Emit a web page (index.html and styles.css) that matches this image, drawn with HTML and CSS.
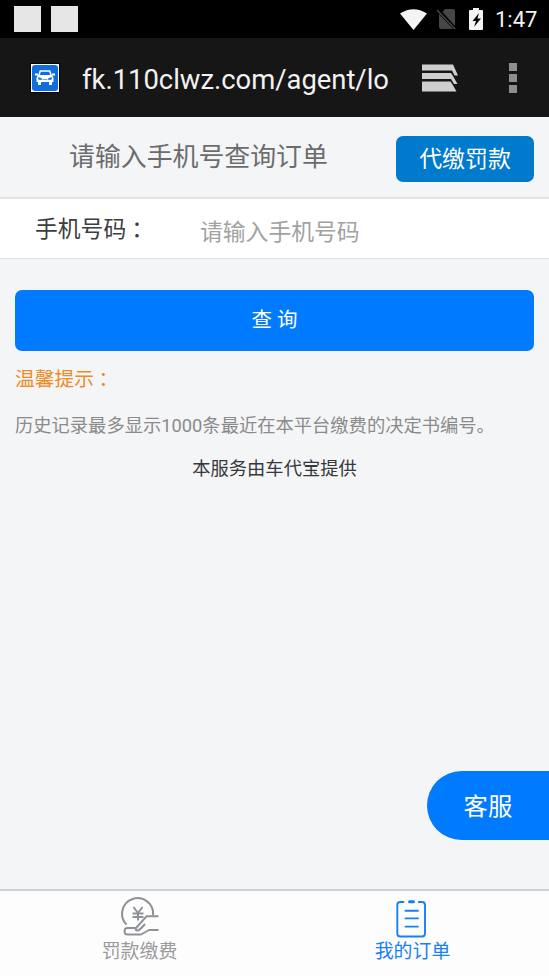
FILE: index.html
```
<!DOCTYPE html>
<html lang="zh-CN">
<head>
<meta charset="utf-8">
<meta name="viewport" content="width=device-width">
<title>查询订单</title>
<link rel="stylesheet" href="styles.css">
</head>
<body>
<div class="status">
  <div class="notices"><i></i><i></i></div>
  <svg class="wifi" width="28" height="24" viewBox="0 0 28 24"><path d="M0 6.500Q13.500-2 27 6.500L13.500 23Z" fill="#f4f4f4"/></svg>
  <svg class="sim" width="22" height="24" viewBox="0 0 22 24"><path d="M9 2h8q2 0 2 2v15L6.500 5ZM3 7l14 15H5q-2 0-2-2Z" fill="#464646"/><path d="M1 3l18 19" stroke="#464646" stroke-width="1.600"/></svg>
  <svg class="battery" width="15" height="24" viewBox="0 0 15 24"><path d="M4 1h6v2h3q1 0 1 1v18q0 1-1 1H1q-1 0-1-1V4q0-1 1-1h3Z" fill="#f4f4f4"/><path d="M10 6L3.500 14h3.500L5 20l7-8.500H8.500Z" fill="#000"/></svg>
  <span class="clock">1:47</span>
</div>
<div class="browser">
  <svg class="favicon" width="30" height="30" viewBox="0 0 30 30"><path d="M0 0h30v30H0Z" fill="#000"/><path d="M1 1h28v28H1Z" fill="#fff"/><rect x="2" y="2" width="26" height="26" rx="3" fill="#106de0"/><path d="M9 12l1.300-4h9.400l1.300 4" fill="none" stroke="#fff" stroke-width="1.500"/><path d="M5 10.500h3v2H5ZM22 10.500h3v2h-3ZM8 12h14l1.500 3v4H22v3h-3v-3h-8v3H8v-3H6.500v-4Z" fill="#fff"/><path d="M8.500 14.500l3 1v1.200l-3-.5ZM21.500 14.500l-3 1v1.200l3-.5ZM12.500 16.500h5" fill="#106de0" stroke="#106de0" stroke-width=".6"/></svg>
  <div class="url">fk.110clwz.com/agent/lo</div>
  <svg class="tabs-icon" width="38" height="30" viewBox="0 0 38 30"><g fill="#cfcfcf"><path d="M1 1.500h31l5 11h-3.500l-2.500-5H1ZM1 10h29l2 3 4.500 8H33l-3-5H1ZM1 18.500h28.500l2 3 4 7H1Z"/></g></svg>
  <div class="more"><i></i><i></i><i></i></div>
</div>
<header class="header">
  <h1>请输入手机号查询订单</h1>
  <button class="pay">代缴罚款</button>
</header>
<div class="field">
  <label for="phone">手机号码<span class="colon">：</span></label>
  <input id="phone" type="tel" placeholder="请输入手机号码">
</div>
<main class="content">
  <button class="query">查 询</button>
  <h2>温馨提示<span class="colon">：</span></h2>
  <p class="note">历史记录最多显示1000条最近在本平台缴费的决定书编号。</p>
  <p class="provider">本服务由车代宝提供</p>
</main>
<button class="service">客服</button>
<nav class="nav">
  <a class="tab">
    <svg width="40" height="42" viewBox="0 0 40 42" fill="none" stroke="#8e9297" stroke-width="2" stroke-linejoin="round"><path d="M6.500 28.500A15.500 15.500 0 1 1 33 19.500"/><path d="M13.500 11l4.500 6 4.500-6M18 17v7.500M12.500 17.500h11M12.500 21h11"/><path d="M38.500 20.300H26.500L16 32M38.500 34H29L21 38.500H7.500q-3 0-3-3.250t3-3.250H16q-1 2.500 1.500 2.500 2 0 7.500-6.500"/></svg>
    <span>罚款缴费</span>
  </a>
  <a class="tab active">
    <svg width="40" height="42" viewBox="0 0 40 42" fill="none" stroke="#1680f5" stroke-width="1.900" stroke-linecap="round"><path d="M10.500 6H7.300q-3 0-3 3v28.500q0 3 3 3H29q3 0 3-3V9q0-3-3-3h-3.200M12.500 14.700h12.500M12.500 22.400h12.500M12.500 30.600h12.500"/><path d="M16.500 5.700h4" stroke-width="3"/></svg>
    <span>我的订单</span>
  </a>
</nav>
</body>
</html>
```
FILE: styles.css
```
* { box-sizing: border-box; }
body {
  margin: 0;
  height: 976px;
  display: flex;
  flex-direction: column;
  overflow: hidden;
  background: #f4f5f7;
  font-family: Roboto, "Noto Sans CJK SC", sans-serif;
}
button { border: 0; padding: 0; font-family: inherit; color: #fff; }
h1, h2, p { margin: 0; font-weight: 400; }
svg { display: block; flex: none; }
.status {
  height: 38px;
  flex: none;
  display: flex;
  align-items: center;
  background: #000;
  padding: 0 12px 0 14px;
}
.notices { display: flex; gap: 10px; margin-right: auto; }
.notices i { width: 27px; height: 26px; background: #e6e6e6; }
.wifi { margin-right: 8px; }
.sim { margin-right: 11px; }
.clock { width: 42px; margin-left: 11px; font-size: 22px; line-height: 38px; color: #f2f2f2; white-space: nowrap; padding-top: 2px; }
.browser {
  height: 79px;
  flex: none;
  display: flex;
  align-items: center;
  background: #161616;
  padding: 0 32px 0 30px;
}
.favicon { margin-right: 22px; }
.url {
  width: 308px;
  margin-right: -2px;
  white-space: nowrap;
  color: #f2f2f2;
  font-size: 27.4px;
  line-height: 40px;
  padding-top: 4px;
}
.tabs-icon { margin-left: 33px; }
.more { display: flex; flex-direction: column; gap: 3px; margin-left: auto; }
.more i { width: 8px; height: 8px; background: #8e8e8e; }
.header {
  height: 80px;
  flex: none;
  display: flex;
  align-items: flex-start;
  justify-content: space-between;
  padding: 19px 15px 0 69px;
}
.header h1 { font-size: 25.9px; line-height: 38px; padding-top: 2px; color: #6c6c6e; }
.pay { width: 138px; height: 46px; border-radius: 7px; background: #007acc; font-size: 22.9px; line-height: 46px; padding-top: 1px; }
.field {
  height: 62px;
  flex: none;
  display: flex;
  align-items: flex-start;
  background: #fff;
  border-top: 2px solid #e3e4e6;
  border-bottom: 1px solid #dedfe1;
  padding-left: 35px;
}
.field label { width: 165px; font-size: 22.8px; line-height: 58px; padding-top: 2px; color: #3c3d42; }
.field input {
  border: 0;
  padding: 7px 0 0;
  width: 320px;
  height: 59px;
  background: none;
  outline: 0;
  font: 22.8px Roboto, "Noto Sans CJK SC", sans-serif;
}
.field input::placeholder { color: #a2a2a2; }
.colon { padding-left: .22em; }
.content { flex: 1; padding: 31px 15px 0; }
.query { display: block; width: 100%; height: 61px; border-radius: 7px; background: #007aff; font-size: 20.5px; line-height: 58px; padding-bottom: 1px; }
h2 { font-size: 19.8px; line-height: 30px; margin-top: 14px; color: #ef8b24; }
.note { font-size: 18.3px; line-height: 28px; margin-top: 17px; color: #8b8b8b; white-space: nowrap; }
.provider { font-size: 18.3px; line-height: 28px; margin-top: 15px; color: #37383b; text-align: center; }
.service {
  align-self: flex-end;
  flex: none;
  width: 122px;
  height: 69px;
  margin-bottom: 49px;
  padding-bottom: 2px;
  border-radius: 35px 0 0 35px;
  background: #007aff;
  font-size: 24.4px;
}
.nav {
  height: 87px;
  flex: none;
  display: flex;
  background: #fdfdfe;
  border-top: 2px solid #cfd0d4;
  padding: 3px 0 0 3px;
}
.tab { flex: 1; display: flex; flex-direction: column; align-items: center; font-size: 18.9px; line-height: 28px; color: #9a9a9c; }
.tab svg { margin-top: 2px; }
.tab.active { color: #1680f5; }
```
